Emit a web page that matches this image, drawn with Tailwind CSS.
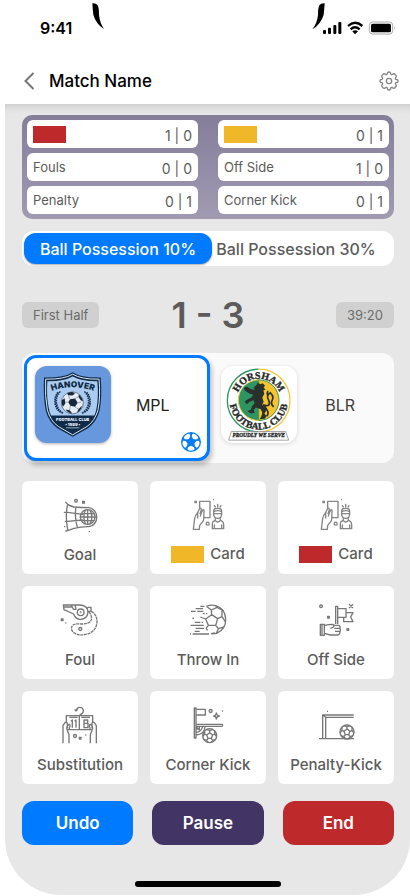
<!DOCTYPE html>
<html lang="en">
<head>
<meta charset="utf-8">
<meta name="viewport" content="width=device-width, initial-scale=1">
<title>Match Name</title>
<script src="https://cdn.jsdelivr.net/npm/@tailwindcss/browser@4"></script>
</head>
<body class="bg-white pl-[5px] font-['Inter',sans-serif] text-[#5b5b5b]">

<!-- Shared drawings -->
<svg class="hidden" aria-hidden="true">
  <defs>
    <symbol id="show-card" viewBox="129 54 120 120">
      <g fill="none" stroke="#858585" stroke-width="4" stroke-linejoin="round" stroke-linecap="round">
        <path d="M164 97V76H195V125H176"/>
        <path d="M145 160L149 127Q151 118 158 110L164 97Q170 94 168 104L165 113L172 103Q178 98 177 107L176 131Q175 138 168 143L164 148L163 160Z"/>
        <path d="M158 111L158 126M171 106L166 120"/>
        <path d="M206 113V104Q206 97 218 97Q230 97 230 104V113Q230 127 218 127Q206 127 206 113ZM206 107Q218 101 230 107M206 113H230"/>
        <path d="M211 128V133L204 137Q202 140 202 146V158H236V146Q236 140 233 137L226 133V128M208 158V147M230 158V147M211 133Q218 143 226 133"/>
        <path d="M218 93V85M211 93L208 89M225 93L228 89"/>
        <circle cx="188" cy="143" r="4.500"/>
      </g>
      <path fill="#858585" d="M148 74h8v8h-8zM204 69h3v4h-3z"/>
    </symbol>
    <g id="football" fill="none">
      <circle r="21"/>
      <path d="M0 -9L9 -2L5 8H-5L-9 -2ZM0 -9V-15M9 -2L15 -5M5 8L9 14M-5 8L-9 14M-9 -2L-15 -5M0 -15L9 -19M0 -15L-9 -19M15 -5L15 -15M15 -5L21 3M9 14L18 11M9 14L4 21M-9 14L-4 21M-9 14L-18 11M-15 -5L-21 3M-15 -5V-15"/>
    </g>
  </defs>
</svg>

<header class="relative">
  <div class="flex h-14 items-center justify-between pl-[35px] pr-[14px]">
    <span class="text-[16px] font-semibold leading-5 text-black">9:41</span>
    <svg class="h-[14px] w-[74px]" viewBox="966 64 222 42" aria-label="Signal, Wi-Fi, battery">
      <rect x="969" y="91" width="9" height="12" rx="3"/><rect x="984" y="84" width="9" height="19" rx="3"/>
      <rect x="1000" y="76" width="9" height="27" rx="3"/><rect x="1015" y="67" width="9" height="36" rx="3"/>
      <g fill="none" stroke="#000" stroke-width="7"><path d="M1044 79Q1065 60 1087 79"/><path d="M1052 89Q1065 77 1079 89"/></g>
      <path d="M1057 95Q1065 88 1074 95L1065 104Z"/>
      <rect x="1108" y="67" width="70" height="36" rx="10" fill="none" stroke="#aaa" stroke-width="3"/>
      <rect x="1113" y="72" width="60" height="26" rx="5"/><path d="M1182 79Q1187 85 1182 91Z" fill="#aaa"/>
    </svg>
  </div>
  <!-- Edges of the device notch -->
  <svg class="absolute left-[85px] top-0 h-[30px] w-[16px]" viewBox="270 0 48 90" aria-hidden="true"><path d="M277 10Q288 9 294 17Q298 30 297 45Q300 71 312 87Q288 72 280 44Q278 27 277 10Z"/></svg>
  <svg class="absolute right-[83px] top-0 h-[30px] w-[16px]" viewBox="930 0 48 90" aria-hidden="true"><path d="M971 10Q960 9 954 17Q950 30 951 45Q948 71 934 88Q960 72 968 44Q970 27 971 10Z"/></svg>
  <div class="flex h-12 items-center pl-[18px] pr-[11px] pt-[2px]">
    <button type="button" aria-label="Back" class="mr-[14px]">
      <svg class="h-[18px] w-3" viewBox="0 0 12 18" fill="none" stroke="#777" stroke-width="2"><path d="M10.500 1L2.500 9L10.500 17"/></svg>
    </button>
    <h1 class="flex-1 text-[17px] font-medium leading-6 text-black">Match Name</h1>
    <button type="button" aria-label="Settings">
      <svg class="size-5" viewBox="0 0 60 60" fill="none" stroke="#858585" stroke-width="4" stroke-linejoin="round">
        <circle cx="30" cy="30" r="8"/>
        <path d="M25 9Q25 3 30 3Q35 3 35 9Q37 12 40 10Q45 6 49 11Q54 15 50 20Q48 23 51 25Q57 25 57 30Q57 35 51 35Q48 37 50 40Q54 45 49 49Q45 54 40 50Q37 48 35 51Q35 57 30 57Q25 57 25 51Q23 48 20 50Q15 54 11 49Q6 45 10 40Q12 37 9 35Q3 35 3 30Q3 25 9 25Q12 23 10 20Q6 15 11 11Q15 6 20 10Q23 12 25 9Z"/>
      </svg>
    </button>
  </div>
</header>

<main class="rounded-b-[56px] bg-[#e7e7e7] pb-2 pl-[17px] pr-4 pt-[11px] shadow-[inset_0_10px_8px_-8px_rgba(0,0,0,0.15)]">

  <section aria-label="Match statistics" class="grid grid-cols-2 gap-x-5 gap-y-[5px] rounded-[10px] bg-linear-to-b from-[#857e9b] to-[#a09ab2] p-[5px] text-[13px]">
    <div class="flex h-7 items-center justify-between rounded-md bg-white px-[6px]"><span class="h-[17px] w-[33px] bg-[#be2a2c]" aria-label="Red cards"></span><span class="pt-[2px] text-[14px]">1 | 0</span></div>
    <div class="flex h-7 items-center justify-between rounded-md bg-white px-[6px]"><span class="h-[17px] w-[33px] bg-[#f0b729]" aria-label="Yellow cards"></span><span class="pt-[2px] text-[14px]">0 | 1</span></div>
    <div class="flex h-7 items-center justify-between rounded-md bg-white px-[6px]"><span class="pt-[2px]">Fouls</span><span class="pt-[2px] text-[14px]">0 | 0</span></div>
    <div class="flex h-7 items-center justify-between rounded-md bg-white px-[6px]"><span class="pt-[2px]">Off Side</span><span class="pt-[2px] text-[14px]">1 | 0</span></div>
    <div class="flex h-7 items-center justify-between rounded-md bg-white px-[6px]"><span class="pt-[2px]">Penalty</span><span class="pt-[2px] text-[14px]">0 | 1</span></div>
    <div class="flex h-7 items-center justify-between rounded-md bg-white px-[6px]"><span class="pt-[2px]">Corner Kick</span><span class="pt-[2px] text-[14px]">0 | 1</span></div>
  </section>

  <div class="mt-3 grid h-[35px] grid-cols-[47fr_45fr] rounded-xl bg-white p-[2px] text-[16px] font-medium">
    <button type="button" class="whitespace-nowrap rounded-xl bg-[#007aff] text-white shadow-[0_1px_2px_rgba(0,0,0,0.35)]">Ball Possession 10%</button>
    <button type="button" class="whitespace-nowrap pr-3">Ball Possession 30%</button>
  </div>

  <section aria-label="Score" class="mt-7 grid grid-cols-[1fr_auto_1fr] items-center">
    <span class="justify-self-start rounded-md bg-[#d0d0d0] px-[11px] py-1 text-[13px] leading-[18px] text-[#6b6b6b]">First Half</span>
    <strong class="text-[36px] font-semibold leading-[42px]">1 - 3</strong>
    <span class="justify-self-end rounded-md bg-[#d0d0d0] px-[11px] py-1 text-[13px] leading-[18px] text-[#6b6b6b]">39:20</span>
  </section>

  <section aria-label="Teams" class="mt-[17px] flex rounded-xl bg-[#fafafa] p-[2px] text-[16px]">
    <button type="button" class="relative flex h-[106px] flex-1 items-center rounded-xl border-3 border-[#007aff] bg-white pb-[7px] pl-2 text-[#222] shadow-[2px_4px_5px_rgba(0,0,0,0.25)]">
      <svg class="h-[77px] w-[76px] rounded-xl bg-[#6797dc] shadow-[0_1px_3px_rgba(0,0,0,0.3)]" viewBox="60 63 228 230" role="img" aria-label="Hanover Football Club crest">
        <path d="M173 81Q198 98 257 97Q262 152 254 196Q245 230 219 249L173 275L127 249Q101 230 92 196Q84 152 87 97Q147 98 173 81Z" fill="#102b48"/>
        <path d="M173 87Q199 103 252 102Q257 153 249 194Q240 227 216 244L173 269L130 244Q106 227 97 194Q89 153 92 102Q148 103 173 87Z" fill="none" stroke="#d8e5f4" stroke-width="3"/>
        <path d="M173 94Q201 109 247 108Q251 154 245 187Q243 200 238 211H108Q103 200 101 187Q94 154 97 108Q146 109 173 94Z" fill="#abcbf1"/>
        <g fill="none" stroke="#17344f" stroke-width="5" stroke-dasharray="5 2"><path d="M136 139Q120 154 125 178Q129 196 145 205M129 141Q116 159 122 182Q127 196 137 201"/><path d="M208 139Q224 154 220 178Q216 196 200 205M215 141Q229 159 224 182Q219 196 208 201"/></g>
        <circle cx="172" cy="173" r="33" fill="#e7edf2" stroke="#31485e" stroke-width="2"/>
        <g fill="#17283b"><path d="M165 162L180 160L188 173L180 185L166 182L160 171Z"/><path d="M156 145Q166 140 174 141L180 146L172 151L160 150ZM192 148Q202 157 204 168L198 166L190 155ZM140 165L149 159L151 175L144 185Q139 176 140 165ZM152 193L164 195L172 205Q158 203 152 193ZM190 192L201 182Q198 197 186 203Z"/></g>
        <path d="M165 162L160 150M180 160L190 155M188 173L198 171M180 185L190 192M166 182L164 195M160 171H151" stroke="#738292" stroke-width="2"/>
        <path id="hanoverArc" d="M106 139Q173 114 241 139" fill="none"/>
        <text font-size="25" font-weight="900" fill="#102b48" text-anchor="middle"><textPath href="#hanoverArc" startOffset="50%">HANOVER</textPath></text>
        <text x="173" y="227" font-size="12" font-weight="900" fill="#e8f0f8" text-anchor="middle">FOOTBALL CLUB</text>
        <text x="173" y="243" font-size="12" font-weight="900" fill="#e8f0f8" text-anchor="middle">• 1989 •</text>
        <path d="M153 248H193" stroke="#d8e5f4" stroke-width="2"/>
      </svg>
      <span class="flex-1 pr-3">MPL</span>
      <svg class="absolute bottom-[6px] right-[6px] size-5" viewBox="-30 -30 60 60" aria-hidden="true">
        <circle r="30" fill="#087cf5"/>
        <g fill="#fff"><path id="ballPanel" d="M-8 -15L-11 -21Q-9 -26 0 -26Q9 -26 11 -21L8 -15L0 -11Z" transform="rotate(36)"/>
        <use href="#ballPanel" transform="rotate(72)"/><use href="#ballPanel" transform="rotate(144)"/><use href="#ballPanel" transform="rotate(216)"/><use href="#ballPanel" transform="rotate(288)"/></g>
      </svg>
    </button>
    <button type="button" class="flex h-[106px] flex-1 items-center pb-[7px] pl-[11px] text-[#3d3d3d]">
      <svg class="h-[77px] w-[76px] rounded-xl bg-white shadow-[0_1px_4px_rgba(0,0,0,0.15)]" viewBox="53 63 228 230" role="img" aria-label="Horsham Football Club crest">
        <path d="M166 72A94 94 0 0 0 166 260" fill="#fff" stroke="#2c9564" stroke-width="4"/>
        <path d="M166 72A94 94 0 0 1 166 260" fill="#fff" stroke="#f5c638" stroke-width="4"/>
        <path d="M166 104A61 61 0 0 0 166 226Z" fill="#2e9461" stroke="#f5c638" stroke-width="3"/>
        <path d="M166 104A61 61 0 0 1 166 226Z" fill="#f8c42e" stroke="#2e9461" stroke-width="3"/>
        <path d="M158 121L164 113L171 117L178 114L185 121L181 128L187 133L180 136L183 146L177 157L181 170L176 180L188 187L189 197L183 205L190 213L184 221L169 222L174 213L177 203L172 192L158 187L151 194L154 203L143 205L132 198L143 193L146 183L154 174L150 165L139 170L130 177L124 169L132 163L144 157L150 149L138 145L125 137L121 128L131 125L143 132L155 134L151 127Z" fill="#29312d"/>
        <path d="M178 179Q205 188 196 165Q187 151 201 143Q214 155 205 169Q202 177 211 185M178 179Q202 200 190 213M195 153Q189 145 194 137" fill="none" stroke="#29312d" stroke-width="5"/>
        <path id="horshamArc" d="M102 148A67 67 0 0 1 230 148" fill="none"/>
        <path id="clubArc" d="M79 166A87 87 0 0 0 253 166" fill="none"/>
        <g font-family="Liberation Serif, serif" font-weight="700" fill="#252928" stroke="#252928" text-anchor="middle">
          <text font-size="30"><textPath href="#horshamArc" startOffset="50%">HORSHAM</textPath></text>
          <text font-size="29"><textPath href="#clubArc" startOffset="50%">FOOTBALL CLUB</textPath></text>
        </g>
        <path d="M84 259H247L256 285H76Z" fill="#fff" stroke="#777" stroke-width="2"/>
        <text x="166" y="277" font-family="Liberation Serif, serif" font-size="16" font-weight="700" font-style="italic" fill="#252928" stroke="#252928" text-anchor="middle">PROUDLY WE SERVE</text>
      </svg>
      <span class="flex-1 pr-2">BLR</span>
    </button>
  </section>

  <section aria-label="Match events" class="mt-[18px] grid grid-cols-3 gap-3 text-[15px] font-medium leading-5">
    <button type="button" class="flex h-[93px] flex-col items-center gap-[10px] rounded-md bg-white pt-[14px]">
      <svg class="size-10" viewBox="135 60 120 120" fill="none" stroke="#777" stroke-width="4" stroke-linecap="round">
        <path d="M152 82L158 88Q164 92 177 96Q201 98 222 98C253 103 253 150 222 155Q203 154 177 160L160 166L153 168M158 88Q150 122 158 164M183 96Q178 126 187 157M148 112L158 112L203 118M151 139H158L203 135"/>
        <circle cx="218" cy="126" r="22"/><path d="M203 116H235M196 126H241M201 137H236M218 104V148M211 106Q202 126 211 146M225 106Q237 126 225 146"/>
        <circle cx="183" cy="77" r="4"/><path d="M203 79h5v5h-5zM149 154v1M223 169v1"/>
      </svg>Goal
    </button>
    <button type="button" class="flex h-[93px] flex-col items-center gap-[10px] rounded-md bg-white pt-[13px]">
      <svg class="size-10"><use href="#show-card"/></svg>
      <span class="flex items-center gap-[6px]"><span class="h-[17px] w-[33px] bg-[#f0b729]"></span>Card</span>
    </button>
    <button type="button" class="flex h-[93px] flex-col items-center gap-[10px] rounded-md bg-white pt-[13px]">
      <svg class="size-10"><use href="#show-card"/></svg>
      <span class="flex items-center gap-[6px]"><span class="h-[17px] w-[33px] bg-[#be2a2c]"></span>Card</span>
    </button>

    <button type="button" class="flex h-[93px] flex-col items-center gap-[10px] rounded-md bg-white pt-[14px]">
      <svg class="size-10" viewBox="135 60 120 120" fill="none" stroke="#777" stroke-width="4" stroke-linejoin="round">
        <path d="M145 75H193Q209 75 216 85Q222 98 215 109Q207 119 194 118Q181 116 176 102L147 89ZM145 81H170M169 75L175 88H183L180 75"/>
        <circle cx="197" cy="97" r="10"/><circle cx="197" cy="97" r="1"/>
        <path d="M215 87L219 82H228V94H219"/>
        <path stroke-dasharray="9 2" d="M229 94Q247 105 246 127Q243 154 218 162Q191 169 175 157Q164 145 174 135Q182 130 200 132Q225 132 229 119Q232 107 221 95"/>
        <circle cx="196" cy="147" r="4.500"/><path d="M139 117h5v5h-5zM151 129h3"/>
      </svg>Foul
    </button>
    <button type="button" class="flex h-[93px] flex-col items-center gap-[10px] rounded-md bg-white pt-[14px]">
      <svg class="size-10" viewBox="129 60 120 120" fill="none" stroke="#777" stroke-width="4" stroke-linejoin="round">
        <path d="M184 79Q198 73 212 77Q241 86 242 117Q243 148 215 160Q207 162 198 161"/>
        <path d="M200 104L218 116L212 136H190L182 117ZM200 104L199 90L186 80M199 90L216 82L212 77M216 82L235 92M218 116L231 110L231 92M231 110L241 125M212 136L220 146L237 141M220 146L214 160M190 136L183 145M182 117L166 111M183 145L188 151M198 161L210 159"/>
        <path d="M152 86H174M166 79H178M138 94H152M157 94H175M173 101H179M183 101H187M142 115H147M149 127H166M170 127H174M137 136H176M152 145H177M149 154H164M135 162H138M143 162H192"/>
      </svg>Throw In
    </button>
    <button type="button" class="flex h-[93px] flex-col items-center gap-[10px] rounded-md bg-white pt-[14px]">
      <svg class="size-10" viewBox="138 60 120 120" fill="none" stroke="#777" stroke-width="4" stroke-linejoin="round">
        <path d="M197 132V79H203V132M203 86H228V112H203M228 98H249L242 111L249 125H221V112"/>
        <path d="M151 133H163V166H151ZM156 133V166M163 137L175 134L190 133Q195 139 187 143L181 145M192 136H207Q212 139 210 145Q213 150 210 155Q210 164 202 165H181L163 160M193 145H209M195 154H210"/>
        <circle cx="153" cy="79" r="4"/><path d="M237 73L249 84M249 73L237 84M173 109h5v5h-5zM231 146h5v5h-5z"/>
      </svg>Off Side
    </button>

    <button type="button" class="flex h-[93px] flex-col items-center gap-[10px] rounded-md bg-white pt-[14px]">
      <svg class="size-10" viewBox="135 373 120 120" fill="none" stroke="#777" stroke-width="4" stroke-linejoin="round">
        <path d="M154 426V405H233V426M157 447H231M193 405V447M163 410H188M199 410H225"/>
        <path d="M168 422L172 418V441M179 422L183 418V441"/><path d="M207 418H218V428H207ZM207 428H219V441H207Z"/>
        <path d="M144 488V435L150 426Q158 422 157 432V440L154 446M162 488V462L157 449Q152 437 162 431Q168 434 163 441V446M244 488V435L238 426Q230 422 231 432V440L234 446M226 488V462L231 449Q236 437 226 431Q220 434 225 441V446"/>
        <path d="M194 402Q205 399 205 390Q204 379 193 380Q184 382 183 391M183 391L179 386M183 391L188 386"/>
        <circle cx="180" cy="466" r="4.500"/><path d="M193 470h5v5h-5zM211 463h3"/>
      </svg>Substitution
    </button>
    <button type="button" class="flex h-[93px] flex-col items-center gap-[10px] rounded-md bg-white pt-[14px]">
      <svg class="size-10" viewBox="129 373 120 120" fill="none" stroke="#777" stroke-width="4" stroke-linejoin="round">
        <path d="M148 382H153V472H148ZM153 386H181V403H153M153 431H231Q235 434 231 437H153M153 455Q169 454 173 437M153 463Q179 462 180 437M155 440L165 449M155 445H163V438"/>
        <use href="#football" x="194" y="465"/>
        <circle cx="197" cy="391" r="4.500"/><path d="M214 397Q215 405 223 406Q215 407 214 415Q213 407 206 406Q213 405 214 397ZM231 391h3"/>
      </svg>Corner Kick
    </button>
    <button type="button" class="flex h-[93px] flex-col items-center gap-[10px] rounded-md bg-white pt-[14px]">
      <svg class="size-10" viewBox="138 373 120 120" fill="none" stroke="#777" stroke-width="4" stroke-linejoin="round">
        <path d="M251 403H158V473M251 410H167V473M158 403L167 410M147 474H252M171 392h3"/>
        <use href="#football" x="231" y="454"/>
      </svg>Penalty-Kick
    </button>
  </section>

  <div class="mt-[17px] grid grid-cols-3 gap-[19px] text-[17px] font-semibold text-white">
    <button type="button" class="h-11 rounded-xl bg-[#007aff] pt-[2px]">Undo</button>
    <button type="button" class="h-11 rounded-xl bg-[#423566] pt-[2px]">Pause</button>
    <button type="button" class="h-11 rounded-xl bg-[#be2a2c] pt-[2px]">End</button>
  </div>

  <div class="mx-auto mt-9 h-[6px] w-[146px] rounded-full bg-black"></div>
</main>
</body>
</html>
